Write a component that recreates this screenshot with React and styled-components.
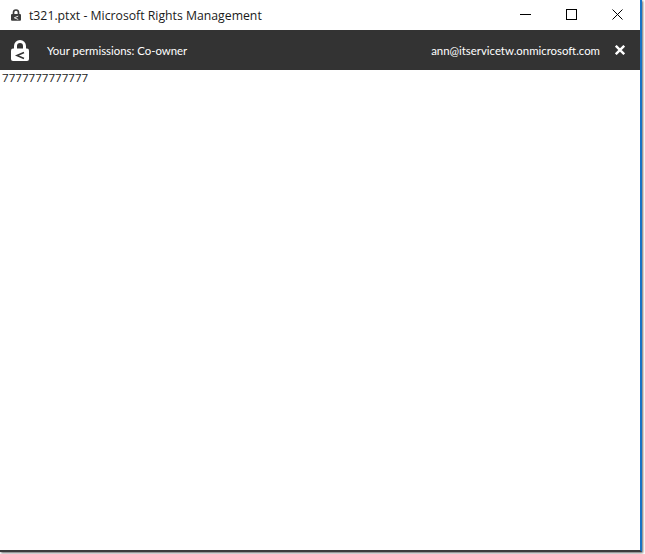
import React from 'react';
import styled, { createGlobalStyle } from 'styled-components';

const Global = createGlobalStyle`
  html, body {
    margin: 0;
    padding: 0;
    background: #ffffff;
    overflow: hidden;
  }
`;

const Page = styled.div`
  width: 645px;
  height: 554px;
  overflow: hidden;
  background: #ffffff;
`;

const Window = styled.div`
  width: 642px;
  height: 552px;
  box-sizing: border-box;
  display: flex;
  flex-direction: column;
  background: #ffffff;
  border-right: 2px solid #1673c5;
  border-bottom: 2px solid #3c3c3c;
  box-shadow: 1px 1px 2px rgba(0, 0, 0, 0.6);
  font-family: 'Open Sans', 'Noto Sans', sans-serif;
`;

const TitleBar = styled.div`
  height: 30px;
  display: flex;
  align-items: center;
  padding-left: 11px;
  color: #1a1a1a;
  font-size: 12.25px;
`;

const TitleText = styled.span`
  margin-left: 8px;
  flex: 1;
`;

const WindowButton = styled.div`
  width: 46px;
  height: 30px;
  padding-bottom: 2px;
  box-sizing: border-box;
  display: flex;
  align-items: center;
  justify-content: center;
`;

const PermissionBar = styled.div`
  height: 40px;
  display: flex;
  align-items: center;
  background: #333333;
  color: #ffffff;
  font-family: Lato, 'Open Sans', sans-serif;
  font-size: 11.4px;
  padding: 0 15px 0 11px;
`;

const Permissions = styled.span`
  margin-left: 18px;
  flex: 1;
`;

const CloseBar = styled.div`
  margin-left: 15px;
  display: flex;
  align-items: center;
`;

const Content = styled.div`
  flex: 1;
  padding: 1px 2px;
  font-size: 11.6px;
  line-height: 14px;
  color: #222222;
`;

function Lock({ width, height, body, mark }) {
  return (
    <svg width={width} height={height} viewBox="0 0 18 21">
      <path d="M4.5 10V6a4.5 4.5 0 0 1 9 0v4" fill="none" stroke={body} strokeWidth="3" />
      <rect x="0" y="8.5" width="18" height="12.5" rx="2" fill={body} />
      <path d="M13 12.5L6 15.5l7 3" fill="none" stroke={mark} strokeWidth="1.6" />
    </svg>
  );
}

export default function App() {
  return (
    <Page>
      <Global />
      <Window>
        <TitleBar>
          <Lock width={10} height={12} body="#3c3c3c" mark="#ffffff" />
          <TitleText>t321.ptxt - Microsoft Rights Management</TitleText>
          <WindowButton>
            <svg width="11" height="11" viewBox="0 0 11 11">
              <path d="M0 5.5h11" stroke="#000" strokeWidth="1" />
            </svg>
          </WindowButton>
          <WindowButton>
            <svg width="11" height="11" viewBox="0 0 11 11">
              <rect x="0.5" y="0.5" width="10" height="10" fill="none" stroke="#000" />
            </svg>
          </WindowButton>
          <WindowButton>
            <svg width="11" height="11" viewBox="0 0 11 11">
              <path d="M0.5 0.5l10 10M10.5 0.5l-10 10" stroke="#000" />
            </svg>
          </WindowButton>
        </TitleBar>
        <PermissionBar>
          <Lock width={18} height={21} body="#ffffff" mark="#333333" />
          <Permissions>Your permissions: Co-owner</Permissions>
          <span>ann@itservicetw.onmicrosoft.com</span>
          <CloseBar>
            <svg width="10" height="10" viewBox="0 0 10 10">
              <path d="M0.8 0.8l8.4 8.4M9.2 0.8L0.8 9.2" stroke="#fff" strokeWidth="2.4" />
            </svg>
          </CloseBar>
        </PermissionBar>
        <Content>7777777777777</Content>
      </Window>
    </Page>
  );
}
